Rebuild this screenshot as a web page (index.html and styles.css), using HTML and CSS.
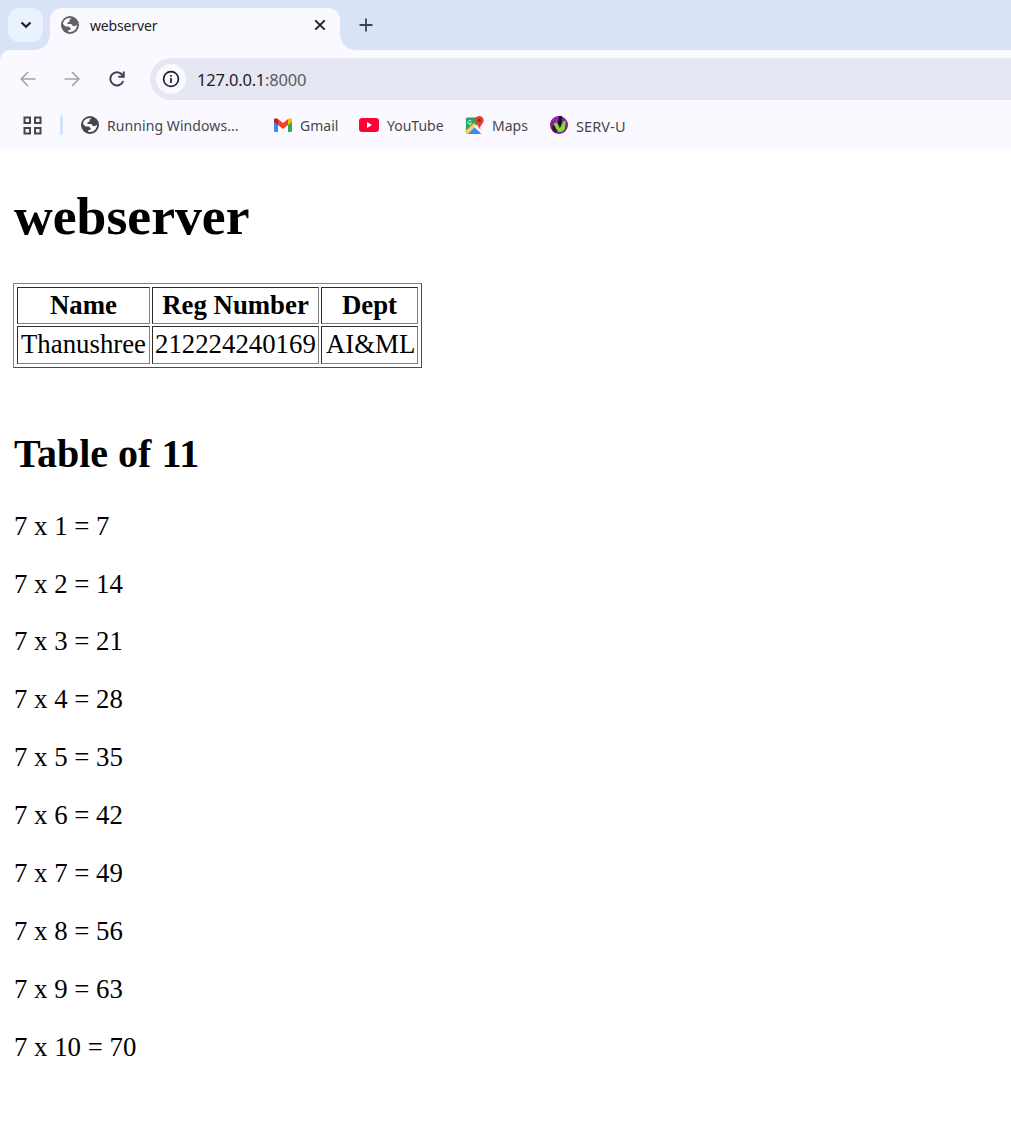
FILE: index.html
```html
<!DOCTYPE html>
<html lang="en">
<head>
<meta charset="utf-8">
<title>webserver</title>
<link rel="stylesheet" href="styles.css">
</head>
<body>
<svg width="0" height="0" class="defs">
  <symbol id="globe" viewBox="0 0 18 18">
    <circle cx="9" cy="9" r="9" fill="currentColor"/>
    <path d="M2 8C2.400 4.500 5 2.200 9 2l1.500.2-2 1.600v1.700l-2 1V8H10c1 0 1.500.8 1.500 2h2c1 0 2-.6 2.500-1.500.2 4-3 7.500-7 7.500l-1.800-.2V14h2.300v-2l-2-1.500h-3z" class="land"/>
  </symbol>
</svg>
<header>
  <div class="tabs">
    <button class="search" aria-label="Search tabs"><svg width="12" height="8" viewBox="0 0 12 8"><path d="m1.500 1.500 4.500 4.300 4.500-4.300" fill="none" stroke="#1f2024" stroke-width="2.200"/></svg></button>
    <div class="tab">
      <svg class="tab-globe" width="18" height="18"><use href="#globe"/></svg>
      <span>webserver</span>
      <svg class="close" width="12" height="12" viewBox="0 0 12 12"><path d="m1.300 1.300 9.400 9.400m0-9.400-9.400 9.400" stroke="#1f2024" stroke-width="1.900"/></svg>
    </div>
    <svg class="plus" width="14" height="14" viewBox="0 0 14 14"><path d="M7 .5v13M.5 7h13" stroke="#3c4453" stroke-width="1.800"/></svg>
  </div>
  <div class="toolbar">
    <svg class="nav" width="16" height="16" viewBox="0 0 16 16"><path d="M15.500 8H1.500M8 1 1.200 8 8 15"/></svg>
    <svg class="nav" width="16" height="16" viewBox="0 0 16 16"><path d="M.5 8h14M8 1l6.800 7L8 15"/></svg>
    <svg class="nav reload" width="16" height="16" viewBox="0 0 16 16"><path d="M14.200 10A6.600 6.600 0 1 1 13 3.600L14.500 5.500M14.700.5v5.300H9.300"/></svg>
    <div class="address">
      <span class="info"><svg width="18" height="18" viewBox="0 0 18 18"><circle cx="9" cy="9" r="7.400" fill="none" stroke="#1f2024" stroke-width="1.700"/><path d="M9 8v5M9 5v1.800" stroke="#1f2024" stroke-width="1.700"/></svg></span>
      <span class="url">127.0.0.1<span class="port">:8000</span></span>
    </div>
  </div>
  <nav class="bookmarks">
    <svg class="apps" width="19" height="19" viewBox="0 0 19 19"><path d="M1.500 1.500h5.500v5.500H1.500zM12 1.500h5.500v5.500H12zM1.500 12h5.500v5.500H1.500zM12 12h5.500v5.500H12z" fill="none" stroke="#45464b" stroke-width="2"/></svg>
    <i class="divider"></i>
    <a class="mark running"><svg width="18" height="18"><use href="#globe"/></svg><span>Running Windows...</span></a>
    <a class="mark gmail"><svg width="18" height="14" viewBox="0 0 18 14"><path d="M0 3v9.500Q0 14 1.500 14H4V6z" fill="#4285f4"/><path d="M14 6v8h2.500q1.500 0 1.500-1.500V3z" fill="#34a853"/><path d="M4 1v6l5 4 5-4V1L9 4.900z" fill="#ea4335"/><path d="M14 1v6l4-3V2c0-2-2-2.500-4-1z" fill="#fbbc04"/><path d="M0 2v2l4 3V1C2-.5 0 0 0 2z" fill="#c5221f"/></svg><span>Gmail</span></a>
    <a class="mark youtube"><svg width="20" height="14" viewBox="0 0 20 14"><rect width="20" height="14" rx="3.300" fill="#ff0033"/><path d="m8 4 5 3-5 3z" fill="#fff"/></svg><span>YouTube</span></a>
    <a class="mark maps"><svg width="19" height="19" viewBox="0 0 19 19"><rect x=".5" y="1.500" width="16.500" height="16.500" rx="1.500" fill="#e2e4e7"/><path d="M2 1.500h10l1 6L1 17.500V2.500z" fill="#24a563"/><path d="m1 16.500 9-8.500" stroke="#ffd044" stroke-width="3"/><path d="m2.500 18 7-6.500 7 6.500z" fill="#4285f4"/><path d="m9.500 9.500 8 8" stroke="#fff" stroke-width="1.500"/><path d="M6.300 5.300a1.900 1.900 0 1 0 .2 2H4.800" fill="none" stroke="#dff4e7"/><path d="M14.300 0a4.300 4.300 0 0 0-4.300 4.300c0 3.600 3.500 4.500 4.300 9 .8-4.500 4.400-5.400 4.400-9A4.300 4.300 0 0 0 14.300 0z" fill="#e04438"/><circle cx="14.300" cy="4.300" r="1.500" fill="#7d2520"/></svg><span>Maps</span></a>
    <a class="mark serv"><svg width="18" height="18" viewBox="0 0 18 18"><circle cx="9" cy="9" r="9" fill="#7b2488"/><path d="M1 5Q4 0 9 .5L9.500 8 7 6z" fill="#9d21aa"/><path d="M9 0h3l-1 12-3-5z" fill="#180d1c"/><path d="M1.500 12 4 9l3 6-2 2z" fill="#35113e"/><path d="m3.500 7.500 3.200-1.200 3 6.200L13.500 5h2.200l-.7 7.500q-2 4-6.500 3.500Q6 13 3.500 7.500z" fill="#80dc37"/></svg><span>SERV-U</span></a>
  </nav>
</header>
<main>
  <h1>webserver</h1>
  <table>
    <tr><th>Name</th><th>Reg Number</th><th>Dept</th></tr>
    <tr><td>Thanushree</td><td>212224240169</td><td>AI&amp;ML</td></tr>
  </table>
  <h2>Table of 11</h2>
  <p>7 x 1 = 7</p>
  <p>7 x 2 = 14</p>
  <p>7 x 3 = 21</p>
  <p>7 x 4 = 28</p>
  <p>7 x 5 = 35</p>
  <p>7 x 6 = 42</p>
  <p>7 x 7 = 49</p>
  <p>7 x 8 = 56</p>
  <p>7 x 9 = 63</p>
  <p>7 x 10 = 70</p>
</main>
</body>
</html>
```
FILE: styles.css
```css
* { box-sizing: border-box; }
body { margin: 0; background: #fff; color: #000; overflow: hidden; font: 26.800px/30px "Liberation Serif", serif; }
.defs { position: absolute; }
svg { display: block; flex: none; }
header { height: 151px; background: #faf9ff; font: 14px/20px "Noto Sans", sans-serif; color: #45464b; white-space: nowrap; }
.land { fill: #faf9ff; }
.tabs { height: 50px; background: #d8e3f7; display: flex; padding: 8px 0 0 8px; }
.search { width: 35px; height: 34px; border: 0; border-radius: 11px; background: #eaf1ff; padding: 0; display: flex; align-items: center; justify-content: center; }
.tab { position: relative; width: 290px; height: 42px; margin-left: 7px; border-radius: 12px 12px 0 0; background: #faf9ff; display: flex; align-items: center; padding: 0 14px 8px 11px; color: #1f2024; }
.tab::before, .tab::after { content: ""; position: absolute; bottom: 0; width: 15px; height: 15px; }
.tab::before { left: -15px; background: radial-gradient(circle at 0 0, transparent 14.500px, #faf9ff 15px); }
.tab::after { right: -15px; background: radial-gradient(circle at 100% 0, transparent 14.500px, #faf9ff 15px); }
.tab-globe { color: #5f6368; }
.tab span { margin: 2px 0 0 11px; letter-spacing: -.15px; }
.close { margin-left: auto; }
.plus { margin: 10px 0 0 19px; }
.toolbar { height: 56px; padding: 8px 0 6px 20px; display: flex; align-items: center; background: radial-gradient(circle at 10px 10px, #faf9ff 9.500px, #d8e3f7 10px) 0 0 / 10px 10px no-repeat; }
.nav { margin-right: 28px; fill: none; stroke: #a4a5aa; stroke-width: 1.700; }
.nav + .nav { margin-right: 29px; }
.nav.nav.reload { margin-right: 25px; stroke: #3c4453; stroke-width: 2; }
.address { flex: 1; height: 42px; border-radius: 21px 0 0 21px; background: #e5e8f3; display: flex; align-items: center; padding-left: 6px; }
.info { width: 30px; height: 30px; border-radius: 50%; background: #faf9ff; display: flex; align-items: center; justify-content: center; }
.url { margin: 1px 0 0 11px; font-size: 16.500px; letter-spacing: -.2px; color: #1f2024; }
.port { color: #5a5c63; }
.bookmarks { height: 45px; display: flex; align-items: center; padding: 0 0 7px 23px; }
.divider { width: 3px; height: 20px; margin-left: 18px; border-radius: 2px; background: #d3e3fd; }
.mark { display: flex; align-items: center; }
.running { margin-left: 18px; width: 193px; }
.running span { letter-spacing: .08px; }
.gmail { width: 85px; }
.youtube { width: 106px; }
.maps { width: 85px; }
.mark span { margin: 2px 0 0 8px; }
.mark.serv span { font-size: 14.500px; letter-spacing: .1px; }
main { padding: 35px 14px 0; }
h1 { margin: 0 0 37px; font-size: 53.700px; line-height: 60px; }
table { width: 409px; height: 85px; margin-left: -1px; table-layout: fixed; border: 1px solid; border-color: #808080 #4c4c4c #4c4c4c #808080; padding: 1px; border-spacing: 2px; }
th, td { height: 37px; padding: 0 2px; border: 1px solid; border-color: #2c2c2c #808080 #808080 #2c2c2c; line-height: 35px; white-space: nowrap; }
td { height: 38px; padding: 0 2px 1px 3px; }
td:nth-child(2) { padding-left: 2px; }
td:nth-child(3) { padding-left: 4px; }
th:nth-child(1) { width: 133px; }
th:nth-child(2) { width: 167px; }
th:nth-child(3) { width: 97px; }
h2 { margin: 63px 0 33.600px; font-size: 40px; line-height: 46px; }
p { margin: 0 0 27.920px; }
```
